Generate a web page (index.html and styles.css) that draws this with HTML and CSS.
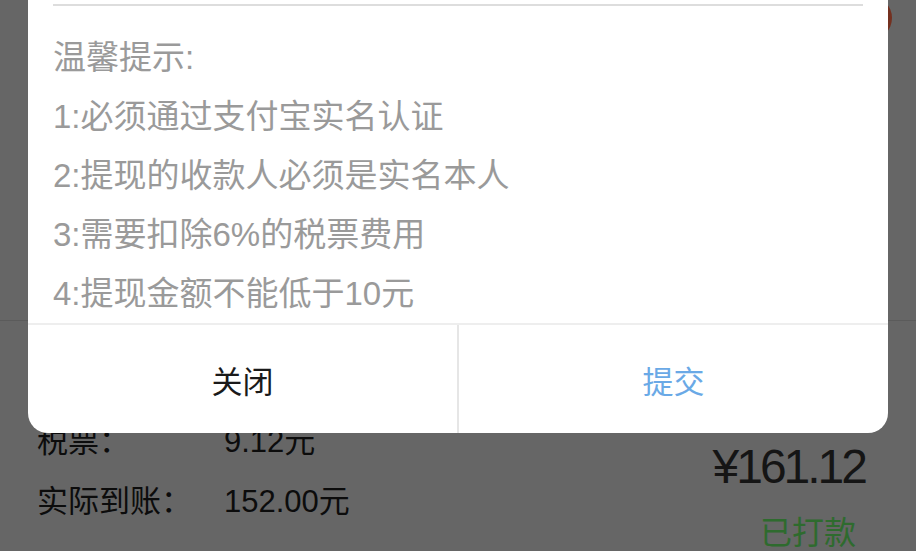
FILE: index.html
```html
<!DOCTYPE html>
<html lang="zh-CN">
<head>
<meta charset="utf-8">
<title>提现</title>
<link rel="stylesheet" href="styles.css">
</head>
<body>
<div class="page">
  <div class="header"><span class="badge"></span></div>
  <div class="record">
    <div class="record-info">
      <div class="row"><span class="label">税票：</span><span class="value">9.12元</span></div>
      <div class="row"><span class="label">实际到账：</span><span class="value">152.00元</span></div>
    </div>
    <div class="record-side">
      <div class="amount">¥161.12</div>
      <div class="status">已打款</div>
    </div>
  </div>
</div>
<div class="dialog">
  <div class="dialog-input"></div>
  <div class="tips">
    <p>温馨提示:</p>
    <p>1:必须通过支付宝实名认证</p>
    <p>2:提现的收款人必须是实名本人</p>
    <p>3:需要扣除6%的税票费用</p>
    <p>4:提现金额不能低于10元</p>
  </div>
  <div class="actions">
    <div class="btn btn-close">关闭</div>
    <div class="btn btn-submit">提交</div>
  </div>
</div>
</body>
</html>
```
FILE: styles.css
```css
* { box-sizing: border-box; }
html, body { margin: 0; padding: 0; }
body {
  width: 916px;
  height: 551px;
  overflow: hidden;
  background: #666666;
  font-family: "Liberation Sans", "Noto Sans CJK SC", sans-serif;
  position: relative;
}
.page { width: 100%; }
.header {
  height: 321px;
  border-bottom: 1px solid #5b5b5b;
  position: relative;
}
.badge {
  position: absolute;
  left: 848px;
  top: -4px;
  width: 44px;
  height: 44px;
  border-radius: 50%;
  background: #74301f;
}
.record {
  display: flex;
  justify-content: space-between;
}
.record-info {
  padding: 91px 0 0 37px;
}
.row {
  display: flex;
  font-size: 31px;
  line-height: 60px;
  color: #0c0c0c;
}
.label { width: 187px; }
.record-side {
  display: flex;
  flex-direction: column;
  align-items: flex-end;
  padding: 116px 51px 0 0;
}
.amount {
  font-size: 48px;
  line-height: 60px;
  letter-spacing: -3px;
  color: #151515;
}
.status {
  font-size: 32px;
  line-height: 60px;
  margin-top: 6px;
  margin-right: 9px;
  color: #2e6b2e;
}
.dialog {
  position: absolute;
  left: 28px;
  top: -60px;
  width: 860px;
  background: #fff;
  border-radius: 20px;
  overflow: hidden;
}
.dialog-input {
  height: 66px;
  margin: 0 25px;
  border-bottom: 2px solid #dddddd;
}
.tips {
  padding: 22px 25px 0;
  font-size: 33px;
  line-height: 59px;
  color: #9a9a9a;
}
.tips p { margin: 0; white-space: nowrap; }
.actions {
  display: flex;
  height: 110px;
  border-top: 2px solid #eeeeee;
}
.btn {
  flex: 1;
  display: flex;
  align-items: center;
  justify-content: center;
  font-size: 31px;
}
.btn + .btn { border-left: 2px solid #e6e6e6; }
.btn-close { color: #1a1a1a; }
.btn-submit { color: #6aa9e6; }
```
